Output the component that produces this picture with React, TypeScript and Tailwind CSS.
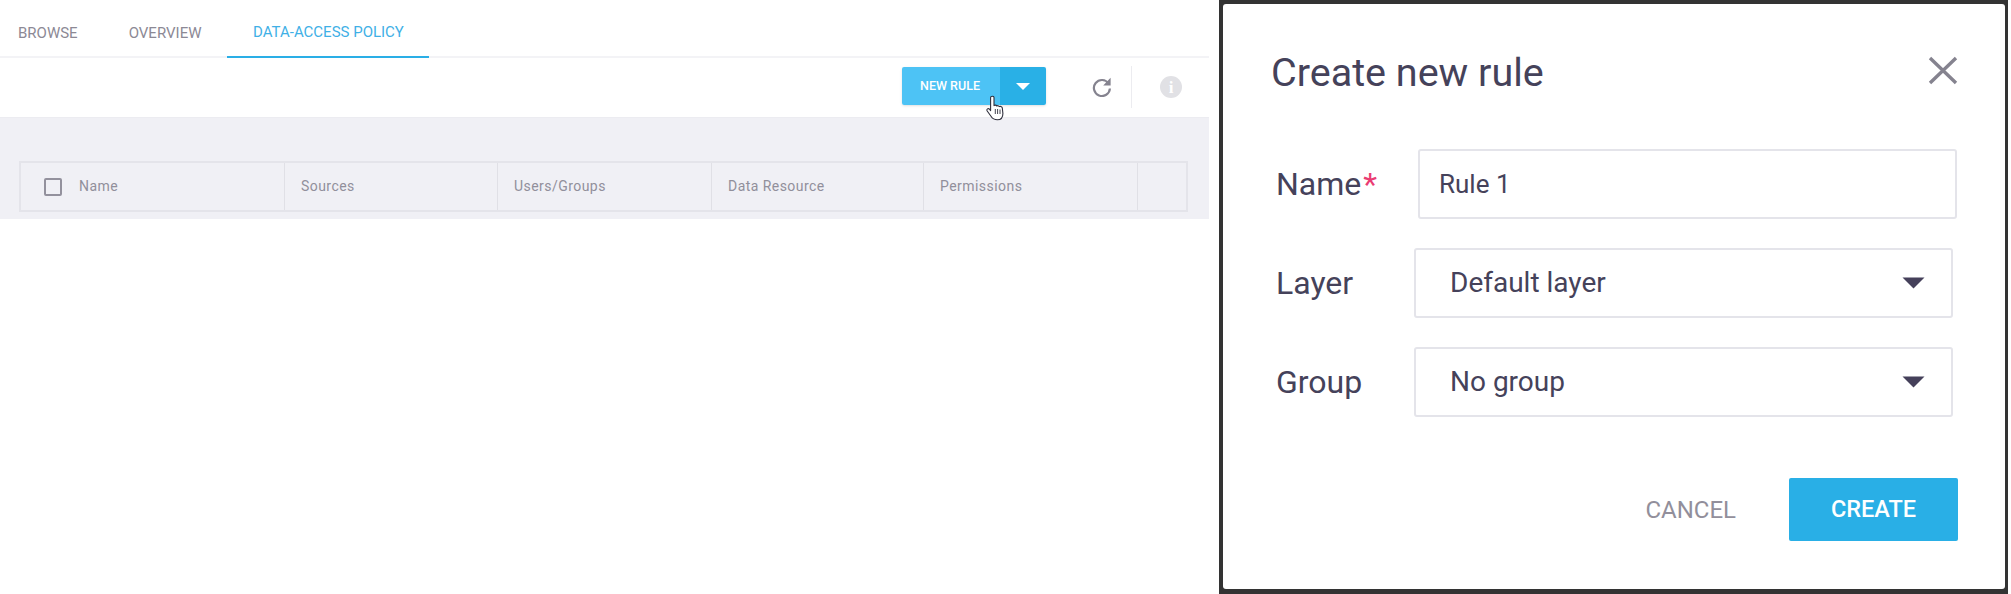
import React from "react";

const Caret = () => (
  <svg width="23" height="12" viewBox="0 0 23 12" className="shrink-0">
    <path d="M0.5 0.5H22.5L11.5 11.5Z" fill="#45405a" />
  </svg>
);

function SelectRow({ label, value, className }: { label: string; value: string; className: string }) {
  return (
    <div className={`flex items-center ${className}`}>
      <div className="w-[142px] pl-[4px] text-[32px] text-[#45425a]">{label}</div>
      <div className="flex h-[70px] w-[539px] items-center justify-between rounded-[3px] border-2 border-[#e4e4ea] pl-[34px] pr-[26px] text-[28px] text-[#45425a]">
        <span>{value}</span>
        <Caret />
      </div>
    </div>
  );
}

function Th({ children, className = "" }: { children?: React.ReactNode; className?: string }) {
  return (
    <div className={`flex items-center border-r border-[#e0e0e6] pl-[16px] ${className}`}>{children}</div>
  );
}

export default function App() {
  return (
    <div className="flex h-[594px] w-[2011px] bg-white font-['Roboto',sans-serif]">
      <div className="w-[1209px] shrink-0">
        <div className="flex h-[58px] items-stretch border-b-2 border-[#f3f3f6] pl-[18px] text-[15px] text-[#8c8995]">
          <div className="flex h-[58px] items-center pr-[51px] pt-[8px]">BROWSE</div>
          <div className="flex h-[58px] items-center pr-[26px] pt-[8px]">OVERVIEW</div>
          <div className="flex h-[58px] w-[202px] items-center justify-center border-b-2 border-[#2aaee6] pt-[8px] text-[#3fb0e6]">
            DATA-ACCESS POLICY
          </div>
        </div>

        <div className="flex h-[59px] items-start justify-end pr-[27px] pt-[9px]">
          <div className="relative mr-[46px] flex h-[38px] w-[144px] overflow-visible rounded-[2px] text-white shadow-sm">
            <div className="flex w-[98px] items-center justify-center rounded-l-[2px] bg-[#4dc3f5] pr-[2px] text-[12.5px] font-medium">
              NEW RULE
            </div>
            <div className="flex w-[46px] items-center justify-center rounded-r-[2px] bg-[#29b0e6]">
              <svg width="14" height="7" viewBox="0 0 14 7">
                <path d="M0 0H14L7 7Z" fill="#fff" />
              </svg>
            </div>
            <svg
              width="18"
              height="26"
              viewBox="0 0 18 26"
              className="absolute left-[84px] top-[28px]"
            >
              <path
                d="M4.6 2.6C4.6 0.7 8 0.7 8 2.6V10.6C8.8 9.9 10.2 10 10.7 11C11.5 10.4 12.8 10.6 13.2 11.6C14 11.1 16 11.4 16.3 12.9L16.9 18.5C16.9 22 15.2 24.8 11.4 24.8C8 24.8 6.4 23.6 5 21.3L1.2 16C0.2 14.3 2.2 12.8 3.5 14.2L4.6 15.6Z"
                fill="#fff"
                stroke="#2f2f3c"
                strokeWidth="1.1"
                strokeLinejoin="round"
              />
              <path d="M9.3 14V19M11.6 14V19M14 14.5V19" stroke="#2f2f3c" strokeWidth="0.9" fill="none" />
            </svg>
          </div>
          <svg width="20" height="20" viewBox="0 0 20 20" className="mt-[10px] shrink-0">
            <path d="M16.6 6.6A8 8 0 1 0 17.9 11.5" fill="none" stroke="#85838f" strokeWidth="2.2" />
            <path d="M18.6 0.8V8.4H11.2Z" fill="#85838f" />
          </svg>
          <div className="ml-[19px] mr-[28px] mt-[-1px] h-[42px] w-px bg-[#ececf0]" />
          <div className="mt-[9px] flex h-[22px] w-[22px] items-center justify-center rounded-full bg-[#e1e1e5] font-['Liberation_Serif',serif] text-[17px] font-bold leading-none text-white">
            i
          </div>
        </div>

        <div className="h-[102px] border-t border-[#ececf1] bg-[#f0f0f5] px-[19px] pt-[43px]">
          <div className="grid h-[51px] w-[1169px] grid-cols-[264px_213px_214px_212px_214px_1fr] border-2 border-[#e4e4ea] text-[14px] tracking-[0.45px] text-[#918f9b]">
            <Th className="pl-[23px]">
              <span className="mr-[17px] h-[18px] w-[18px] rounded-[2px] border-2 border-[#93919d]" />
              Name
            </Th>
            <Th>Sources</Th>
            <Th>Users/Groups</Th>
            <Th>Data Resource</Th>
            <Th>Permissions</Th>
            <div />
          </div>
        </div>
      </div>

      <div className="ml-[10px] h-[594px] w-[789px] shrink-0 bg-[#333333] pb-[5px] pl-[4px] pr-[3px] pt-[4px]">
        <div className="h-[585px] rounded-[3px] bg-white pl-[48px] pr-[47px] pt-[51px]">
          <div className="flex h-[36px] items-center justify-between">
            <h1 className="text-[39.5px] font-normal leading-none text-[#45425a]">Create new rule</h1>
            <svg width="30" height="29" viewBox="0 0 30 29" className="mt-[-6px] shrink-0">
              <path d="M2 2L28 27M28 2L2 27" stroke="#85838f" strokeWidth="3.4" fill="none" />
            </svg>
          </div>

          <div className="mt-[58px] flex items-center">
            <div className="w-[147px] pl-[5px] text-[32px] text-[#45425a]">
              Name<span className="ml-[2px] text-[#ea3d73]">*</span>
            </div>
            <div className="flex h-[70px] w-[539px] items-center rounded-[3px] border-2 border-[#e4e4ea] pl-[19px] text-[26px] text-[#45425a]">
              Rule 1
            </div>
          </div>

          <SelectRow className="mt-[29px] pl-[1px]" label="Layer" value="Default layer" />
          <SelectRow className="mt-[29px] pl-[1px]" label="Group" value="No group" />

          <div className="mt-[61px] flex items-center justify-end">
            <span className="mr-[53px] text-[24px] text-[#928f9b]">CANCEL</span>
            <div className="flex h-[63px] w-[169px] items-center justify-center rounded-[2px] bg-[#29afe6] text-[23.5px] font-medium text-white">
              CREATE
            </div>
          </div>
        </div>
      </div>
    </div>
  );
}
